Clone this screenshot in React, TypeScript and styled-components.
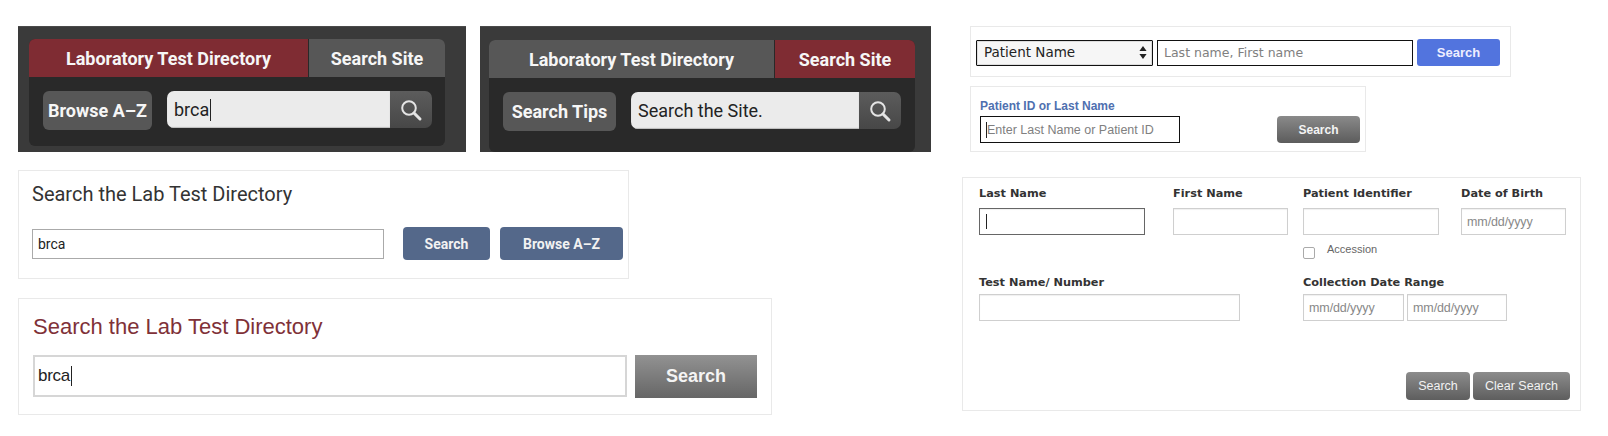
import React from "react";
import styled, { createGlobalStyle } from "styled-components";

const Global = createGlobalStyle`
  html, body { margin: 0; padding: 0; background: #fff; }
  body { width: 1608px; height: 436px; overflow: hidden; font-family: "Liberation Sans", Arial, sans-serif; }
  * { box-sizing: border-box; }
`;

const Page = styled.div`
  display: flex;
  width: 1608px;
  height: 436px;
  padding: 26px 0 0 18px;
`;
const LeftColumn = styled.div`
  display: flex;
  flex-direction: column;
  width: 944px;
`;
const RightColumn = styled.div`
  display: flex;
  flex-direction: column;
  align-items: flex-start;
  width: 620px;
`;
const WidgetRow = styled.div`
  display: flex;
  gap: 14px;
`;
const DarkPanel = styled.div<{ $w: number; $left: number; $top: number; $right: number }>`
  width: ${p => p.$w}px;
  height: 126px;
  background: #3a3a3a;
  padding: ${p => p.$top}px ${p => p.$right}px 0 ${p => p.$left}px;
  box-shadow: inset 0 1px 0 #4a4a4a;
`;
const DarkInner = styled.div<{ $h: number }>`
  height: ${p => p.$h}px;
  background: #292929;
  border-radius: 6px;
  overflow: hidden;
`;
const Tabs = styled.div`
  display: flex;
  height: 38px;
  gap: 1px;
`;
const Tab = styled.div<{ $active?: boolean; $w: number }>`
  width: ${p => p.$w}px;
  display: flex;
  align-items: center;
  justify-content: center;
  background: ${p => (p.$active ? "#7f2c33" : "#575757")};
  color: #f6f6f6;
  font: 700 18px Roboto, sans-serif;
  white-space: nowrap;
`;
const SearchRow = styled.div<{ $pl: number; $gap: number }>`
  display: flex;
  align-items: flex-start;
  padding: 14px 13px 0 ${p => p.$pl}px;
  gap: ${p => p.$gap}px;
`;
const DarkButton = styled.div<{ $w: number }>`
  width: ${p => p.$w}px;
  height: 39px;
  display: flex;
  align-items: center;
  justify-content: center;
  border-radius: 6px;
  background: #575757;
  color: #f6f6f6;
  font: 700 18px Roboto, sans-serif;
  white-space: nowrap;
`;
const SearchBox = styled.div<{ $w: number }>`
  width: ${p => p.$w}px;
  height: 37px;
  display: flex;
  border-radius: 7px;
  overflow: hidden;
`;
const SearchText = styled.div`
  flex: 1;
  display: flex;
  align-items: center;
  padding-left: 7px;
  background: #ebebeb;
  box-shadow: inset 0 -1px 1px #bbb;
  color: #222;
  font: 400 18px Roboto, sans-serif;
`;
const SearchIconCell = styled.div`
  width: 42px;
  display: flex;
  align-items: center;
  justify-content: center;
  background: linear-gradient(#5c5c5c, #474747);
`;
const Caret = styled.span<{ $h: number }>`
  display: inline-block;
  width: 1px;
  height: ${p => p.$h}px;
  background: #222;
  margin-left: 1px;
  vertical-align: middle;
`;
const LightPanel = styled.div<{ $w: number; $h: number; $mt: number; $ml?: number }>`
  width: ${p => p.$w}px;
  height: ${p => p.$h}px;
  margin-top: ${p => p.$mt}px;
  margin-left: ${p => p.$ml ?? 0}px;
  border: 1px solid #e9e9e9;
  background: #fff;
  flex: none;
`;
const LabPanelTitle = styled.div`
  padding: 10px 0 0 13px;
  font: 400 20px/26px Roboto, sans-serif;
  color: #333;
`;
const LabRow = styled.div`
  display: flex;
  align-items: center;
  gap: 10px;
  padding: 20px 0 0 13px;
`;
const LabInput = styled.div`
  width: 352px;
  height: 30px;
  display: flex;
  align-items: center;
  padding-left: 5px;
  margin-right: 9px;
  border: 1px solid #aaa;
  color: #222;
  font: 400 14px Roboto, sans-serif;
`;
const SlateButton = styled.div<{ $w: number }>`
  width: ${p => p.$w}px;
  height: 33px;
  display: flex;
  align-items: center;
  justify-content: center;
  border-radius: 4px;
  background: #54688a;
  color: #f2f2f2;
  font: 700 14px Roboto, sans-serif;
`;
const DirectoryTitle = styled.div`
  padding: 15px 0 0 14px;
  font: 400 22px/26px "Liberation Sans", Arial, sans-serif;
  color: #7f3138;
`;
const DirectoryRow = styled.div`
  display: flex;
  gap: 8px;
  padding: 15px 0 0 14px;
`;
const DirectoryInput = styled.div`
  width: 594px;
  height: 42px;
  display: flex;
  align-items: center;
  padding-left: 3px;
  border: 2px solid #d6d6d6;
  color: #222;
  font: 400 17px "Liberation Sans", Arial, sans-serif;
  letter-spacing: -0.3px;
`;
const GreyGradientButton = styled.div`
  width: 122px;
  height: 43px;
  display: flex;
  align-items: center;
  justify-content: center;
  background: linear-gradient(#929292, #666);
  color: #f4f4f4;
  font: 700 18px "Liberation Sans", Arial, sans-serif;
`;
const PatientRow = styled.div`
  display: flex;
  align-items: center;
  padding: 12px 0 0 5px;
  gap: 4px;
`;
const PatientSelect = styled.div`
  width: 177px;
  height: 26px;
  display: flex;
  align-items: center;
  justify-content: space-between;
  padding: 0 5px 1px 7px;
  border: 1px solid #111;
  border-radius: 1px;
  background: #f6f6f6;
  box-shadow: inset 0 0 0 1px #ddd;
  color: #222;
  font: 400 13.5px "DejaVu Sans", Verdana, sans-serif;
`;
const PatientInput = styled.div`
  width: 256px;
  height: 26px;
  display: flex;
  align-items: center;
  padding: 0 0 1px 6px;
  border: 1px solid #111;
  color: #808080;
  font: 400 12.5px "DejaVu Sans", Verdana, sans-serif;
`;
const BlueButton = styled.div`
  width: 83px;
  height: 27px;
  display: flex;
  align-items: center;
  justify-content: center;
  border-radius: 3px;
  background: #5274de;
  color: #eef;
  font: 700 13px "Liberation Sans", Arial, sans-serif;
`;
const IdLabel = styled.div`
  padding: 11px 0 0 9px;
  font: 700 12px/16px "Liberation Sans", Arial, sans-serif;
  color: #4f70b0;
`;
const IdRow = styled.div`
  display: flex;
  justify-content: space-between;
  padding: 2px 5px 0 9px;
`;
const IdInput = styled.div`
  width: 200px;
  height: 27px;
  display: flex;
  align-items: center;
  padding-left: 4px;
  border: 1px solid #111;
  color: #808080;
  font: 400 12.5px "Liberation Sans", Arial, sans-serif;
`;
const IdButton = styled.div`
  width: 83px;
  height: 27px;
  display: flex;
  align-items: center;
  justify-content: center;
  border-radius: 4px;
  background: linear-gradient(#8a8a8a, #5c5c5c);
  color: #f4f4f4;
  font: 700 12px "Liberation Sans", Arial, sans-serif;
`;
const FormPanel = styled(LightPanel)`
  display: flex;
  flex-direction: column;
  padding: 9px 10px 0 16px;
`;
const FormRow = styled.div<{ $mt?: number; $h: number }>`
  display: grid;
  grid-template-columns: 194px 130px 158px 105px;
  height: ${p => p.$h}px;
  margin-top: ${p => p.$mt ?? 0}px;
`;
const WideCell = styled.div`
  grid-column: span 2;
`;
const SpanTwo = styled.div`
  grid-column: span 2;
  display: flex;
  flex-direction: column;
`;
const Cell = styled.div`
  display: flex;
  flex-direction: column;
`;
const FieldLabel = styled.div<{ $h?: number }>`
  height: ${p => p.$h ?? 21}px;
  font: 700 11.3px/14px "DejaVu Sans", Verdana, sans-serif;
  color: #333;
  white-space: nowrap;
`;
const TextField = styled.div<{ $w: number; $focus?: boolean }>`
  width: ${p => p.$w}px;
  height: 27px;
  display: flex;
  align-items: center;
  padding-left: 5px;
  border: 1px solid ${p => (p.$focus ? "#666" : "#cfcfcf")};
  box-shadow: inset 0 1px 1px #f0f0f0;
  color: #888;
  font: 400 12.5px "Liberation Sans", Arial, sans-serif;
  letter-spacing: -0.1px;
`;
const DateRange = styled.div`
  display: flex;
  gap: 3px;
`;
const AccessionRow = styled.div`
  display: flex;
  align-items: flex-start;
  gap: 12px;
  padding-top: 8px;
  color: #666;
  font: 400 11px/12px "Liberation Sans", Arial, sans-serif;
`;
const CheckBox = styled.span`
  display: block;
  width: 12px;
  height: 12px;
  margin-top: 4px;
  border: 1px solid #aaa;
  border-radius: 2px;
  background: #fff;
`;
const FormActions = styled.div`
  display: flex;
  justify-content: flex-end;
  gap: 3px;
  margin-top: 48px;
`;
const FormButton = styled.div<{ $w: number }>`
  width: ${p => p.$w}px;
  height: 28px;
  display: flex;
  align-items: center;
  justify-content: center;
  border-radius: 4px;
  background: linear-gradient(#8c8c8c, #5e5e5e);
  color: #f2f2f2;
  font: 400 12.5px "Liberation Sans", Arial, sans-serif;
`;

const SearchGlyph = () => (
  <svg width="24" height="24" viewBox="0 0 24 24" fill="none" stroke="#e4e4e4">
    <circle cx="10" cy="10" r="6.8" strokeWidth="2" />
    <path d="M15 15 L21 21" strokeWidth="3" strokeLinecap="round" />
  </svg>
);

const SelectArrows = () => (
  <svg width="8" height="13" viewBox="0 0 8 13" fill="#222">
    <path d="M4 0 L7.6 5 H0.4 Z M4 13 L0.4 8 H7.6 Z" />
  </svg>
);

export default function App() {
  return (
    <Page>
      <Global />
      <LeftColumn>
        <WidgetRow>
          <DarkPanel $w={448} $left={11} $top={13} $right={21}>
            <DarkInner $h={107}>
              <Tabs>
                <Tab $active $w={279}>Laboratory Test Directory</Tab>
                <Tab $w={136}>Search Site</Tab>
              </Tabs>
              <SearchRow $pl={14} $gap={15}>
                <DarkButton $w={109}>Browse A–Z</DarkButton>
                <SearchBox $w={265}>
                  <SearchText>brca<Caret $h={22} /></SearchText>
                  <SearchIconCell><SearchGlyph /></SearchIconCell>
                </SearchBox>
              </SearchRow>
            </DarkInner>
          </DarkPanel>
          <DarkPanel $w={451} $left={9} $top={14} $right={16}>
            <DarkInner $h={112}>
              <Tabs>
                <Tab $w={285}>Laboratory Test Directory</Tab>
                <Tab $active $w={140}>Search Site</Tab>
              </Tabs>
              <SearchRow $pl={14} $gap={15}>
                <DarkButton $w={113}>Search Tips</DarkButton>
                <SearchBox $w={270}>
                  <SearchText>Search the Site.</SearchText>
                  <SearchIconCell><SearchGlyph /></SearchIconCell>
                </SearchBox>
              </SearchRow>
            </DarkInner>
          </DarkPanel>
        </WidgetRow>
        <LightPanel $w={611} $h={109} $mt={18}>
          <LabPanelTitle>Search the Lab Test Directory</LabPanelTitle>
          <LabRow>
            <LabInput>brca</LabInput>
            <SlateButton $w={87}>Search</SlateButton>
            <SlateButton $w={123}>Browse A–Z</SlateButton>
          </LabRow>
        </LightPanel>
        <LightPanel $w={754} $h={117} $mt={19}>
          <DirectoryTitle>Search the Lab Test Directory</DirectoryTitle>
          <DirectoryRow>
            <DirectoryInput>brca<Caret $h={20} /></DirectoryInput>
            <GreyGradientButton>Search</GreyGradientButton>
          </DirectoryRow>
        </LightPanel>
      </LeftColumn>
      <RightColumn>
        <LightPanel $w={541} $h={51} $mt={0} $ml={8}>
          <PatientRow>
            <PatientSelect>Patient Name<SelectArrows /></PatientSelect>
            <PatientInput>Last name, First name</PatientInput>
            <BlueButton>Search</BlueButton>
          </PatientRow>
        </LightPanel>
        <LightPanel $w={396} $h={66} $mt={9} $ml={8}>
          <IdLabel>Patient ID or Last Name</IdLabel>
          <IdRow>
            <IdInput><Caret $h={16} />Enter Last Name or Patient ID</IdInput>
            <IdButton>Search</IdButton>
          </IdRow>
        </LightPanel>
        <FormPanel $w={619} $h={234} $mt={25}>
          <FormRow $h={82}>
            <Cell>
              <FieldLabel>Last Name</FieldLabel>
              <TextField $w={166} $focus><Caret $h={15} /></TextField>
            </Cell>
            <Cell>
              <FieldLabel>First Name</FieldLabel>
              <TextField $w={115} />
            </Cell>
            <Cell>
              <FieldLabel>Patient Identifier</FieldLabel>
              <TextField $w={136} />
              <AccessionRow><CheckBox />Accession</AccessionRow>
            </Cell>
            <Cell>
              <FieldLabel>Date of Birth</FieldLabel>
              <TextField $w={105}>mm/dd/yyyy</TextField>
            </Cell>
          </FormRow>
          <FormRow $h={48} $mt={7}>
            <WideCell>
              <FieldLabel $h={18}>Test Name/ Number</FieldLabel>
              <TextField $w={261} />
            </WideCell>
            <SpanTwo>
              <FieldLabel $h={18}>Collection Date Range</FieldLabel>
              <DateRange>
                <TextField $w={101}>mm/dd/yyyy</TextField>
                <TextField $w={100}>mm/dd/yyyy</TextField>
              </DateRange>
            </SpanTwo>
          </FormRow>
          <FormActions>
            <FormButton $w={64}>Search</FormButton>
            <FormButton $w={97}>Clear Search</FormButton>
          </FormActions>
        </FormPanel>
      </RightColumn>
    </Page>
  );
}
